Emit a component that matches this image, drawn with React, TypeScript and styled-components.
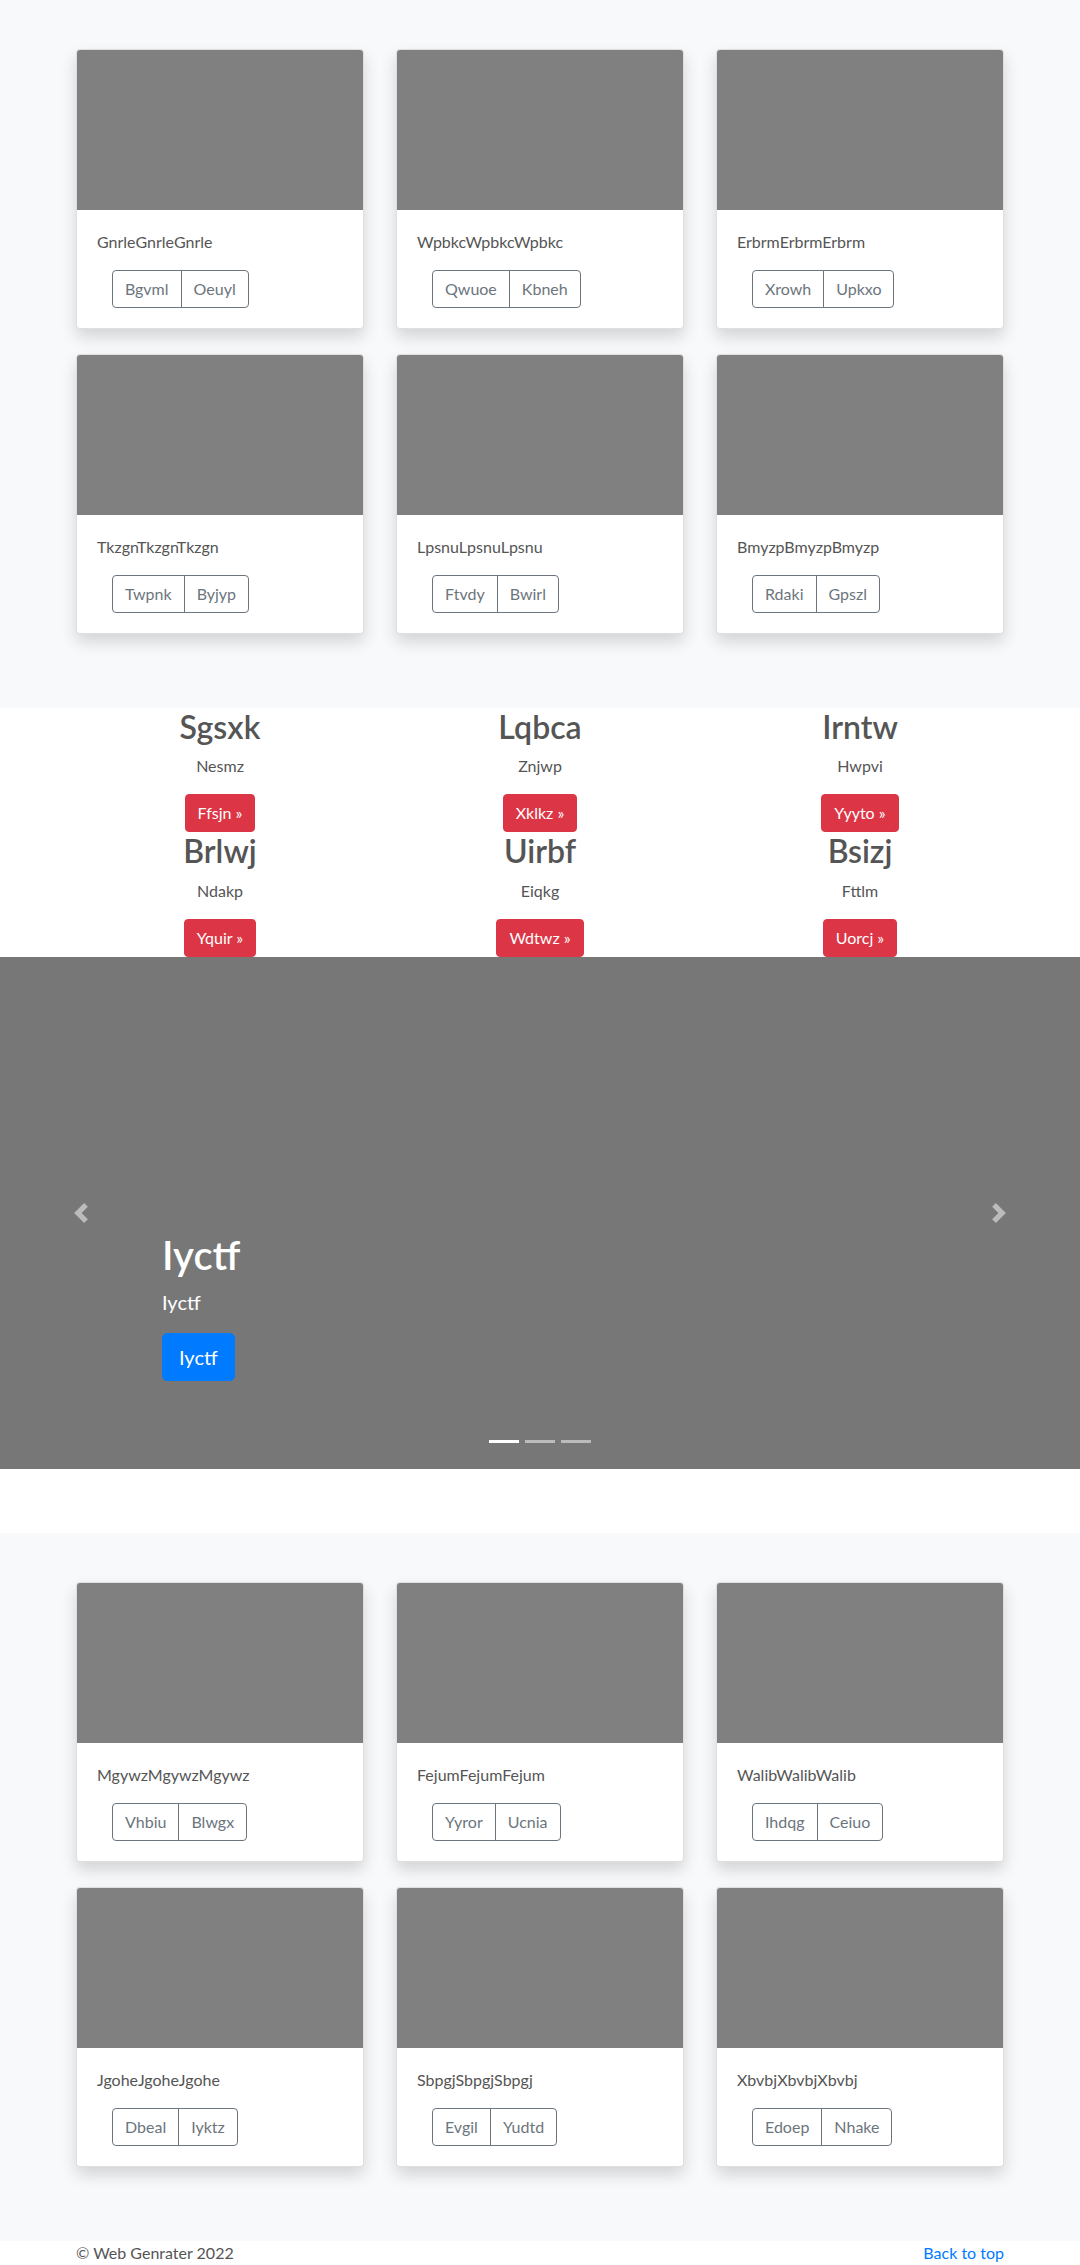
import styled, { createGlobalStyle } from "styled-components";

const GlobalStyle = createGlobalStyle`
    * {
        box-sizing: border-box;
    }
    body {
        margin: 0;
        background: #fff;
        font-family: Lato, "Open Sans", sans-serif;
        font-size: 16px;
        line-height: 1.5;
        color: #555;
    }
`;

const Album = styled.section`
    background-color: #f8f9fa;
    padding: 49px 0 74px;
`;

const CardGrid = styled.div`
    width: 928px;
    margin: 0 auto;
    display: grid;
    grid-template-columns: repeat(3, 288px);
    column-gap: 32px;
    row-gap: 25px;
`;

const Card = styled.div`
    background: #fff;
    border: 1px solid rgba(0, 0, 0, 0.125);
    border-radius: 4px;
    overflow: hidden;
    box-shadow: 0 8px 16px rgba(0, 0, 0, 0.15);
`;

const Thumb = styled.div`
    height: 160px;
    background-color: #808080;
`;

const CardBody = styled.div`
    padding: 20px;
`;

const CardText = styled.p`
    margin: 0 0 16px;
    color: #555;
`;

const BtnGroup = styled.div`
    display: inline-flex;
    margin-left: 15px;
`;

const OutlineBtn = styled.button`
    font: inherit;
    font-size: 16px;
    line-height: 24px;
    padding: 6px 12px;
    color: #6c757d;
    background: transparent;
    border: 1px solid #6c757d;
    cursor: pointer;

    &:first-child {
        border-radius: 4px 0 0 4px;
    }
    &:last-child {
        border-radius: 0 4px 4px 0;
        margin-left: -1px;
    }
`;

const Features = styled.section`
    width: 960px;
    margin: 0 auto;
    display: grid;
    grid-template-columns: repeat(3, 1fr);
    text-align: center;
`;

const Feature = styled.div`
    display: flex;
    flex-direction: column;
    align-items: center;
`;

const FeatureTitle = styled.h2`
    margin: 0 0 8px;
    font-size: 32px;
    font-weight: 600;
    line-height: 1.2;
    color: #555;
`;

const FeatureText = styled.p`
    margin: 0 0 16px;
    color: #555;
`;

const DangerBtn = styled.a`
    display: inline-block;
    padding: 6px 12px;
    font-size: 16px;
    line-height: 24px;
    color: #fff;
    background-color: #dc3545;
    border: 1px solid #dc3545;
    border-radius: 4px;
    text-decoration: none;
`;

const Carousel = styled.section`
    position: relative;
    height: 512px;
    margin-bottom: 64px;
    background-color: #777;
    display: flex;
    flex-direction: column;
    justify-content: flex-end;
    padding: 0 15% 72px;
    color: #fff;
`;

const CaptionTitle = styled.h1`
    margin: 0 0 8px;
    font-size: 40px;
    font-weight: 600;
    line-height: 1.2;
`;

const CaptionLead = styled.p`
    margin: 0 0 16px;
    font-size: 20px;
    line-height: 30px;
`;

const CaptionAction = styled.p`
    margin: 0 0 16px;
`;

const PrimaryBtn = styled.a`
    display: inline-block;
    padding: 8px 16px;
    font-size: 20px;
    line-height: 30px;
    color: #fff;
    background-color: #007bff;
    border: 1px solid #007bff;
    border-radius: 5px;
    text-decoration: none;
`;

const Control = styled.a<{ $side: "left" | "right" }>`
    position: absolute;
    top: 0;
    bottom: 0;
    ${(p) => p.$side}: 0;
    width: 15%;
    display: flex;
    align-items: center;
    justify-content: center;
    opacity: 0.5;
`;

const Indicators = styled.ol`
    position: absolute;
    left: 0;
    right: 0;
    bottom: 16px;
    margin: 0;
    padding: 0;
    list-style: none;
    display: flex;
    justify-content: center;
`;

const Indicator = styled.li<{ $active?: boolean }>`
    width: 30px;
    height: 3px;
    margin: 10px 3px;
    background-color: #fff;
    opacity: ${(p) => (p.$active ? 1 : 0.5)};
`;

const Footer = styled.footer`
    width: 928px;
    margin: 0 auto;
    display: flex;
    justify-content: space-between;
    color: #555;
`;

const FooterText = styled.p`
    margin: 0;
`;

const TopLink = styled.a`
    color: #007bff;
    text-decoration: none;
`;

type CardData = { title: string; a: string; b: string };

const topCards: CardData[] = [
    { title: "GnrleGnrleGnrle", a: "Bgvml", b: "Oeuyl" },
    { title: "WpbkcWpbkcWpbkc", a: "Qwuoe", b: "Kbneh" },
    { title: "ErbrmErbrmErbrm", a: "Xrowh", b: "Upkxo" },
    { title: "TkzgnTkzgnTkzgn", a: "Twpnk", b: "Byjyp" },
    { title: "LpsnuLpsnuLpsnu", a: "Ftvdy", b: "Bwirl" },
    { title: "BmyzpBmyzpBmyzp", a: "Rdaki", b: "Gpszl" },
];

const bottomCards: CardData[] = [
    { title: "MgywzMgywzMgywz", a: "Vhbiu", b: "Blwgx" },
    { title: "FejumFejumFejum", a: "Yyror", b: "Ucnia" },
    { title: "WalibWalibWalib", a: "Ihdqg", b: "Ceiuo" },
    { title: "JgoheJgoheJgohe", a: "Dbeal", b: "Iyktz" },
    { title: "SbpgjSbpgjSbpgj", a: "Evgil", b: "Yudtd" },
    { title: "XbvbjXbvbjXbvbj", a: "Edoep", b: "Nhake" },
];

const features = [
    { title: "Sgsxk", text: "Nesmz", btn: "Ffsjn" },
    { title: "Lqbca", text: "Znjwp", btn: "Xklkz" },
    { title: "Irntw", text: "Hwpvi", btn: "Yyyto" },
    { title: "Brlwj", text: "Ndakp", btn: "Yquir" },
    { title: "Uirbf", text: "Eiqkg", btn: "Wdtwz" },
    { title: "Bsizj", text: "Fttlm", btn: "Uorcj" },
];

function AlbumSection({ cards }: { cards: CardData[] }) {
    return (
        <Album>
            <CardGrid>
                {cards.map((c) => (
                    <Card key={c.title}>
                        <Thumb />
                        <CardBody>
                            <CardText>{c.title}</CardText>
                            <BtnGroup>
                                <OutlineBtn>{c.a}</OutlineBtn>
                                <OutlineBtn>{c.b}</OutlineBtn>
                            </BtnGroup>
                        </CardBody>
                    </Card>
                ))}
            </CardGrid>
        </Album>
    );
}

function Chevron({ dir }: { dir: "prev" | "next" }) {
    const d =
        dir === "prev"
            ? "M5.25 0l-4 4 4 4 1.5-1.5L4.25 4l2.5-2.5L5.25 0z"
            : "M2.75 0l-1.5 1.5L3.75 4l-2.5 2.5L2.75 8l4-4-4-4z";
    return (
        <svg width="20" height="20" viewBox="0 0 8 8" fill="#fff">
            <path d={d} />
        </svg>
    );
}

export default function App() {
    return (
        <>
            <GlobalStyle />
            <AlbumSection cards={topCards} />
            <Features>
                {features.map((f) => (
                    <Feature key={f.title}>
                        <FeatureTitle>{f.title}</FeatureTitle>
                        <FeatureText>{f.text}</FeatureText>
                        <DangerBtn href="#">{f.btn} »</DangerBtn>
                    </Feature>
                ))}
            </Features>
            <Carousel>
                <CaptionTitle>Iyctf</CaptionTitle>
                <CaptionLead>Iyctf</CaptionLead>
                <CaptionAction>
                    <PrimaryBtn href="#">Iyctf</PrimaryBtn>
                </CaptionAction>
                <Control $side="left" href="#">
                    <Chevron dir="prev" />
                </Control>
                <Control $side="right" href="#">
                    <Chevron dir="next" />
                </Control>
                <Indicators>
                    <Indicator $active />
                    <Indicator />
                    <Indicator />
                </Indicators>
            </Carousel>
            <AlbumSection cards={bottomCards} />
            <Footer>
                <FooterText>© Web Genrater 2022</FooterText>
                <TopLink href="#">Back to top</TopLink>
            </Footer>
        </>
    );
}
